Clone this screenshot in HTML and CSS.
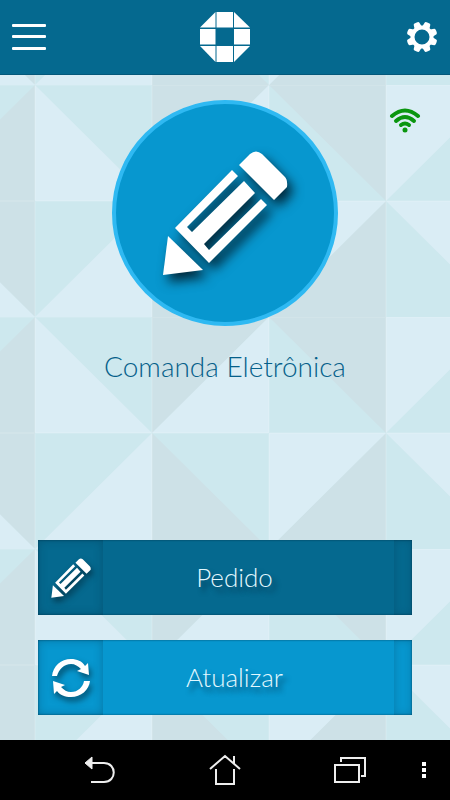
FILE: index.html
```html
<!DOCTYPE html>
<html lang="pt-BR">
<head>
  <meta charset="UTF-8" />
  <meta name="viewport" content="width=device-width, initial-scale=1.0"/>
  <title>Comanda Eletrônica</title>
  <link rel="stylesheet" href="styles.css">
</head>
<body>
  <!-- shared icons -->
  <svg class="defs" width="0" height="0" aria-hidden="true">
    <symbol id="pencil" viewBox="0 0 126 126">
      <path d="M6 57 L1 96 L41 91 Z" transform="translate(0 29)"/>
      <path fill-rule="evenodd" d="M13 78 L70 20 L76 26 L25 77 L30 82 L82 31 L93 43 L42 94 L47 100 L99 49 L105 55 L47 113 Z"/>
      <path d="M77 15 L88 4 Q94 -1 100 4 L122 26 Q126 29 125 37 L112 50 Z"/>
    </symbol>
    <symbol id="refresh" viewBox="0 0 40 40">
      <path d="M1 18 C2 8 10 1 20 1 C26 1 31 3 34 8 L37 5 L38 17 L26 13 L30 11 C27 8 24 6 20 6 C13 6 8 11 6 18 Z"/>
      <path d="M39 23 C38 32 30 39 20 39 C14 39 9 37 6 33 L3 36 L2 23 L14 27 L10 29 C13 32 16 34 20 34 C27 34 32 29 33 23 Z"/>
    </symbol>
  </svg>

  <header class="topbar">
    <button class="icon-btn" aria-label="Menu">
      <svg width="34" height="28" viewBox="0 0 34 28" fill="#fff">
        <rect y="1" width="34" height="3" rx="1"/>
        <rect y="12" width="34" height="3" rx="1"/>
        <rect y="24" width="34" height="3" rx="1"/>
      </svg>
    </button>
    <svg class="logo" width="50" height="50" viewBox="0 0 50 50" fill="#fff">
      <path d="M0 15.500 L15.500 0 V15.500 Z"/>
      <path d="M16.500 0 H33 V15.500 H16.500 Z"/>
      <path d="M34 0 L50 15.500 H34 Z"/>
      <path d="M0 17 H15.500 V32.500 H0 Z"/>
      <path d="M34 17 H50 V32.500 H34 Z"/>
      <path d="M0 34 H15.500 V50 Z"/>
      <path d="M16.500 34 H33 V50 H16.500 Z"/>
      <path d="M34 34 H50 L34 50 Z"/>
    </svg>
    <button class="icon-btn" aria-label="Configurações">
      <svg width="32" height="32" viewBox="-16 -16 32 32">
        <g fill="#fff" transform="rotate(22.500)">
          <path id="tooth" d="M-4 -9 L-3 -14.500 Q-3 -15.500 0 -15.500 Q3 -15.500 3 -14.500 L4 -9 Z"/>
          <use href="#tooth" transform="rotate(45)"/>
          <use href="#tooth" transform="rotate(90)"/>
          <use href="#tooth" transform="rotate(135)"/>
          <use href="#tooth" transform="rotate(180)"/>
          <use href="#tooth" transform="rotate(225)"/>
          <use href="#tooth" transform="rotate(270)"/>
          <use href="#tooth" transform="rotate(315)"/>
        </g>
        <circle r="9.500" fill="#05698f" stroke="#fff" stroke-width="4"/>
      </svg>
    </button>
  </header>

  <main class="content">
    <svg class="backdrop" width="100%" height="100%" aria-hidden="true">
      <defs>
        <pattern id="triangles" x="-82" y="10" width="702" height="232" patternUnits="userSpaceOnUse">
          <rect width="702" height="232" fill="#cde8ee"/>
          <path fill="#cde1e7" d="M117 0 V116 H0 Z M0 116 H117 V232 Z M234 0 H351 L234 116 Z M234 116 V232 H351 Z M351 0 H468 V116 Z M468 116 V232 H351 Z M585 0 H702 V116 Z"/>
          <path fill="#daedf5" d="M0 116 V232 H117 Z M117 0 V116 H234 Z M234 116 V232 H117 Z M351 0 V116 H234 Z M351 116 H468 L351 232 Z M468 0 H585 L468 116 Z M468 116 H585 V232 Z"/>
          <path fill="none" stroke="#fff" stroke-opacity=".1" stroke-width="2" d="M0 0 H702 M0 116 H702 M117 0 V232 M234 0 V232 M351 0 V232 M468 0 V232"/>
        </pattern>
      </defs>
      <rect width="100%" height="100%" fill="url(#triangles)"/>
    </svg>

    <svg class="wifi" width="32" height="26" viewBox="0 0 32 26" fill="none" stroke="#0a960f" stroke-width="4" stroke-linecap="round">
      <path d="M3 9 Q16 -2 29 9"/>
      <path d="M7 14 Q16 6 25 14"/>
      <path d="M12 18 Q16 15 20 18"/>
      <circle cx="16" cy="23" r="2.500" fill="#0a960f" stroke="none"/>
    </svg>

    <section class="hero">
      <div class="badge">
        <svg class="badge-icon"><use href="#pencil"/></svg>
      </div>
      <h1>Comanda Eletrônica</h1>
    </section>

    <div class="actions">
      <button class="action action-dark">
        <span class="action-icon"><svg width="40" height="40"><use href="#pencil"/></svg></span>
        <span class="action-label">Pedido</span>
        <span class="action-edge"></span>
      </button>
      <button class="action action-light">
        <span class="action-icon"><svg width="40" height="40"><use href="#refresh"/></svg></span>
        <span class="action-label">Atualizar</span>
        <span class="action-edge"></span>
      </button>
    </div>
  </main>

  <nav class="navbar">
    <button class="nav-btn" aria-label="Voltar">
      <svg width="32" height="32" viewBox="0 0 32 32" fill="none" stroke="#eee" stroke-width="2">
        <path d="M8 9 H20 C33 9 33 28 20 28 H7"/>
        <path d="M1 9 L8 3 V15 Z" fill="#eee" stroke-width="1"/>
      </svg>
    </button>
    <button class="nav-btn" aria-label="Início">
      <svg width="32" height="32" viewBox="0 0 32 32" fill="none" stroke="#eee" stroke-width="2">
        <path d="M1 15 L16 2 L31 15 M25 10 V2 M7 15 V30 H25 V15"/>
      </svg>
    </button>
    <button class="nav-btn" aria-label="Recentes">
      <svg width="32" height="32" viewBox="0 0 32 32" fill="none" stroke="#eee" stroke-width="2">
        <path d="M1 11 H25 V28 H1 Z M7 8 V4 H31 V22 H27"/>
      </svg>
    </button>
    <button class="nav-btn" aria-label="Mais opções">
      <svg width="4" height="16" viewBox="0 0 4 16" fill="#fff">
        <path d="M0 0 H4 V4 H0 Z M0 6 H4 V10 H0 Z M0 12 H4 V16 H0 Z"/>
      </svg>
    </button>
  </nav>
</body>
</html>
```

FILE: styles.css
```css
:root {
  --dark-blue: #05698f;
  --light-blue: #0797cf;
  --ring-blue: #2fb9f2;
}

* {
  box-sizing: border-box;
}

body {
  display: flex;
  flex-direction: column;
  min-height: 100vh;
  margin: 0;
  font-family: Lato, "Open Sans", sans-serif;
  font-weight: 300;
}

button {
  padding: 0;
  border: none;
  background: none;
  font: inherit;
  color: inherit;
  cursor: pointer;
}

svg {
  display: block;
}

.defs {
  position: absolute;
}

.topbar {
  display: flex;
  align-items: center;
  justify-content: space-between;
  height: 75px;
  padding: 0 12px;
  background-color: var(--dark-blue);
  border-bottom: 1px solid #04587a;
}

.icon-btn {
  display: flex;
  justify-content: flex-end;
  width: 34px;
}

.content {
  position: relative;
  flex: 1;
  display: flex;
  flex-direction: column;
  justify-content: space-between;
  padding: 25px 38px;
}

.backdrop {
  position: absolute;
  inset: 0;
}

.wifi {
  position: absolute;
  top: 32px;
  right: 29px;
}

.hero,
.actions {
  position: relative;
}

.hero {
  display: flex;
  flex-direction: column;
  align-items: center;
  gap: 22px;
}

.badge {
  display: grid;
  place-items: center;
  width: 226px;
  height: 226px;
  border: 4px solid var(--ring-blue);
  border-radius: 50%;
  background-color: var(--light-blue);
}

.badge-icon {
  width: 126px;
  height: 126px;
  fill: #fff;
  overflow: visible;
  filter: drop-shadow(5px 7px 6px rgba(0, 20, 30, 0.85));
}

h1 {
  margin: 0;
  font-size: 28px;
  line-height: 36px;
  font-weight: 300;
  color: #05608a;
}

.actions {
  display: flex;
  flex-direction: column;
  gap: 25px;
}

.action {
  display: flex;
  height: 75px;
  color: #e2f8ff;
  font-size: 26px;
  box-shadow: inset 0 0 2px rgba(0, 40, 60, 0.8);
}

.action-dark {
  background-color: var(--dark-blue);
}

.action-light {
  background-color: var(--light-blue);
}

.action-icon {
  display: grid;
  place-items: center;
  width: 65px;
  height: 100%;
  fill: #fff;
  box-shadow: inset 0 0 10px rgba(0, 40, 60, 0.3);
}

.action-icon svg {
  filter: drop-shadow(2px 4px 3px rgba(0, 20, 30, 0.6));
}

.action-label {
  flex: 1;
  align-self: center;
  padding: 0 28px 2px 0;
  text-shadow: 4px 5px 5px rgba(0, 30, 50, 0.6);
}

.action-edge {
  width: 18px;
  height: 100%;
  box-shadow: inset 0 0 8px rgba(0, 40, 60, 0.25);
}

.navbar {
  display: grid;
  grid-template-columns: repeat(3, 1fr) 24px;
  align-items: center;
  height: 60px;
  padding: 0 14px 0 37px;
  background-color: #000;
}

.nav-btn {
  display: flex;
  justify-content: center;
}
```
